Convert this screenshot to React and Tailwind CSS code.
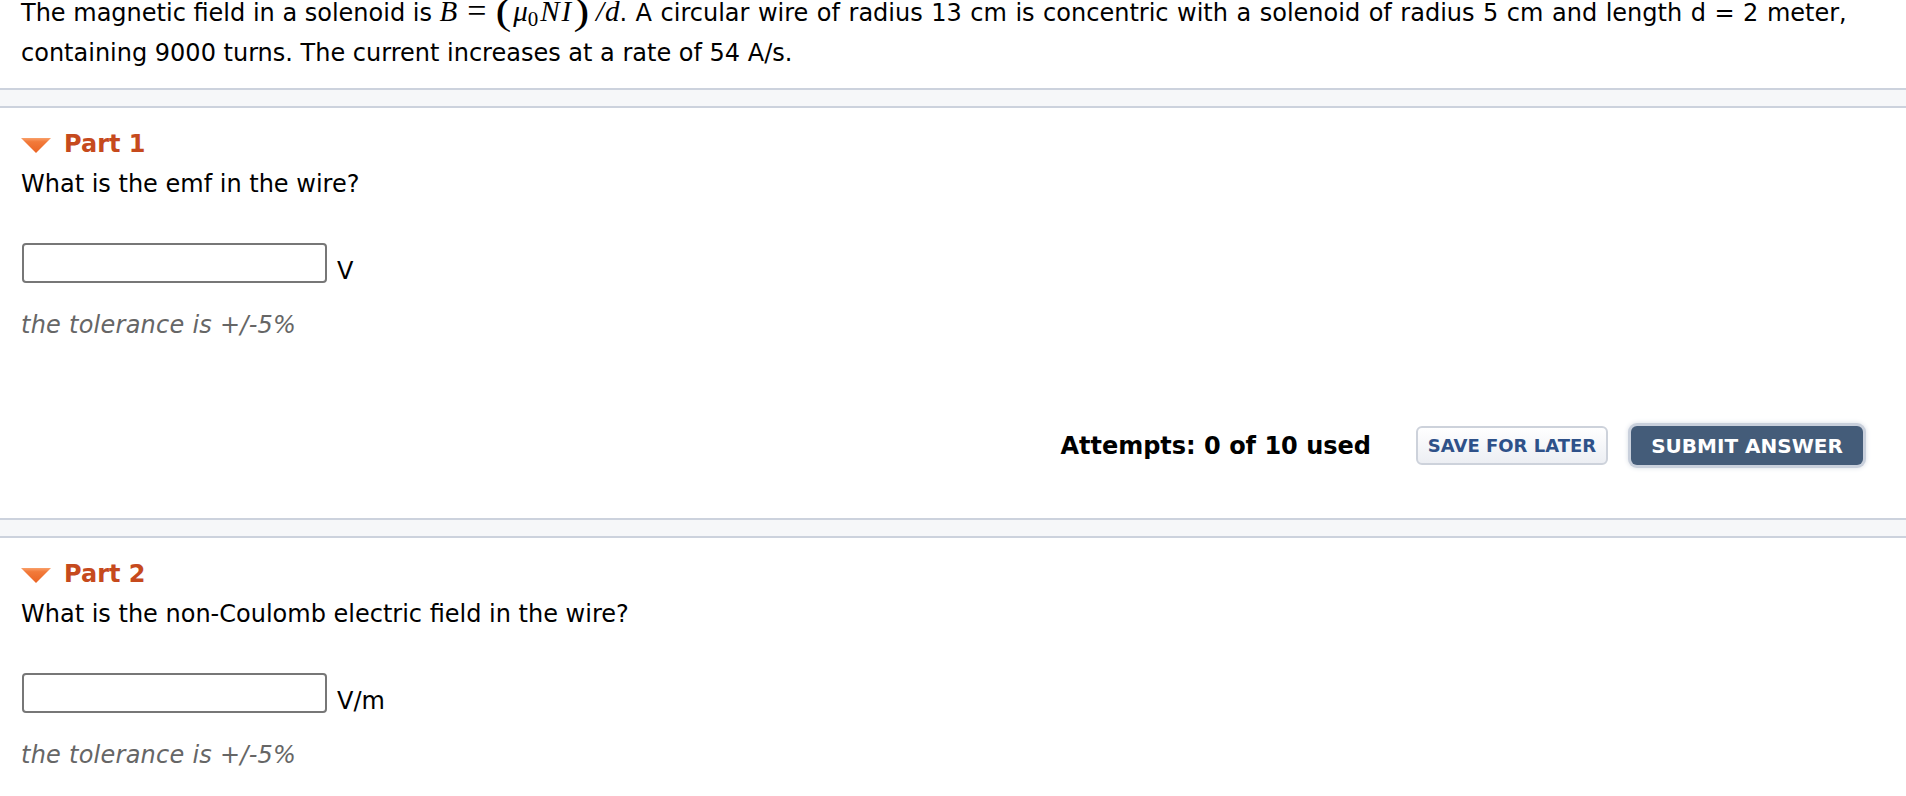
import React from 'react';

const Band = ({ className = '' }) => (
  <div className={`h-[20px] border-y-2 border-[#ccd2dd] bg-[#f6f7f9] ${className}`} />
);

const Caret = () => (
  <svg width="30" height="15" viewBox="0 0 30 15" className="mt-[3px] shrink-0">
    <defs>
      <linearGradient id="caretFill" x1="0" y1="0" x2="0" y2="1">
        <stop offset="0" stopColor="#f9a06a" />
        <stop offset="0.25" stopColor="#f27a3a" />
        <stop offset="1" stopColor="#ea6424" />
      </linearGradient>
    </defs>
    <polygon points="0,0 30,0 15,15" fill="url(#caretFill)" />
  </svg>
);

const Part = ({ title, question, unit, children }) => (
  <section className="px-[21px] pt-[20px]">
    <div className="flex items-center gap-[13px] h-[32px]">
      <Caret />
      <h2 className="text-[24px] font-bold leading-[32px] text-[#c64a1d]">{title}</h2>
    </div>
    <p className="mt-[8px] leading-[32px]">{question}</p>
    <div className="mt-[43px] flex items-end">
      <input
        type="text"
        className="w-[305px] h-[40px] ml-[1px] border-2 border-[#777] rounded-[4px] bg-white outline-none px-2"
      />
      <span className="ml-[10px] leading-[24px]">{unit}</span>
    </div>
    <p className="mt-[26px] italic text-[#666] leading-[32px] tracking-[0.25px]">the tolerance is +/-5%</p>
    {children}
  </section>
);

// math pieces (MathJax-like), kept out of the line box height
const Mi = ({ children, className = '' }) => (
  <span className={`font-['Liberation_Serif',serif] italic text-[29px] leading-[0] ${className}`}>{children}</span>
);

const Paren = ({ children, className = '' }) => (
  <span className={`inline-block font-['Liberation_Serif',serif] text-[38px] leading-[0] align-[-3px] scale-x-125 ${className}`}>{children}</span>
);

export default function App() {
  return (
    <div className="min-h-screen bg-white text-black font-['DejaVu_Sans',Verdana,sans-serif] text-[24px]">
      <div className="px-[21px]">
        <p className="-mt-[7px] leading-[40px] whitespace-nowrap">
          The magnetic field in a solenoid is{' '}
          <Mi className="mr-[3px]">B</Mi>
          <span className="font-['Liberation_Serif',serif] text-[34px] leading-[0] ml-[7px] mr-[9px] align-[-1px]">=</span>
          <Paren className="ml-[1px] mr-[4px]">(</Paren>
          <Mi>μ</Mi>
          <span className="font-['Liberation_Serif',serif] text-[21px] leading-[0] align-[-5px] mr-[2px]">0</span>
          <Mi className="mr-[2px]">N</Mi>
          <Mi className="mr-[4px]">I</Mi>
          <Paren className="mr-[2px]">)</Paren>
          <Mi className="ml-[6px]">/</Mi>
          <Mi className="ml-[1px]">d</Mi>
          <span className="[word-spacing:0.9px]">. A circular wire of radius 13 cm is concentric with a solenoid of radius 5 cm and length d = 2 meter,</span>
          <br />
          containing 9000 turns. The current increases at a rate of 54 A/s.
        </p>
      </div>

      <Band className="mt-[15px]" />

      <Part title="Part 1" question="What is the emf in the wire?" unit="V">
        <div className="mt-[85px] -mr-[21px] pr-[43px] flex items-center justify-end">
          <span className="font-bold text-[24px] leading-[32px]">Attempts: 0 of 10 used</span>
          <button className="ml-[45px] w-[192px] h-[39px] rounded-[6px] border-2 border-[#cdd2db] bg-gradient-to-b from-white to-[#eceef3] text-[#2e5189] font-bold text-[18px] leading-none">
            SAVE FOR LATER
          </button>
          <button className="ml-[23px] w-[232px] h-[39px] rounded-[6px] bg-[#445c79] text-white font-bold text-[20px] leading-none shadow-[0_0_0_3px_#c9d0dc,0_0_5px_3px_#d8dde5]">
            SUBMIT ANSWER
          </button>
        </div>
      </Part>

      <Band className="mt-[53px]" />

      <Part title="Part 2" question="What is the non-Coulomb electric field in the wire?" unit="V/m" />
      <div className="h-[60px]" />
    </div>
  );
}
